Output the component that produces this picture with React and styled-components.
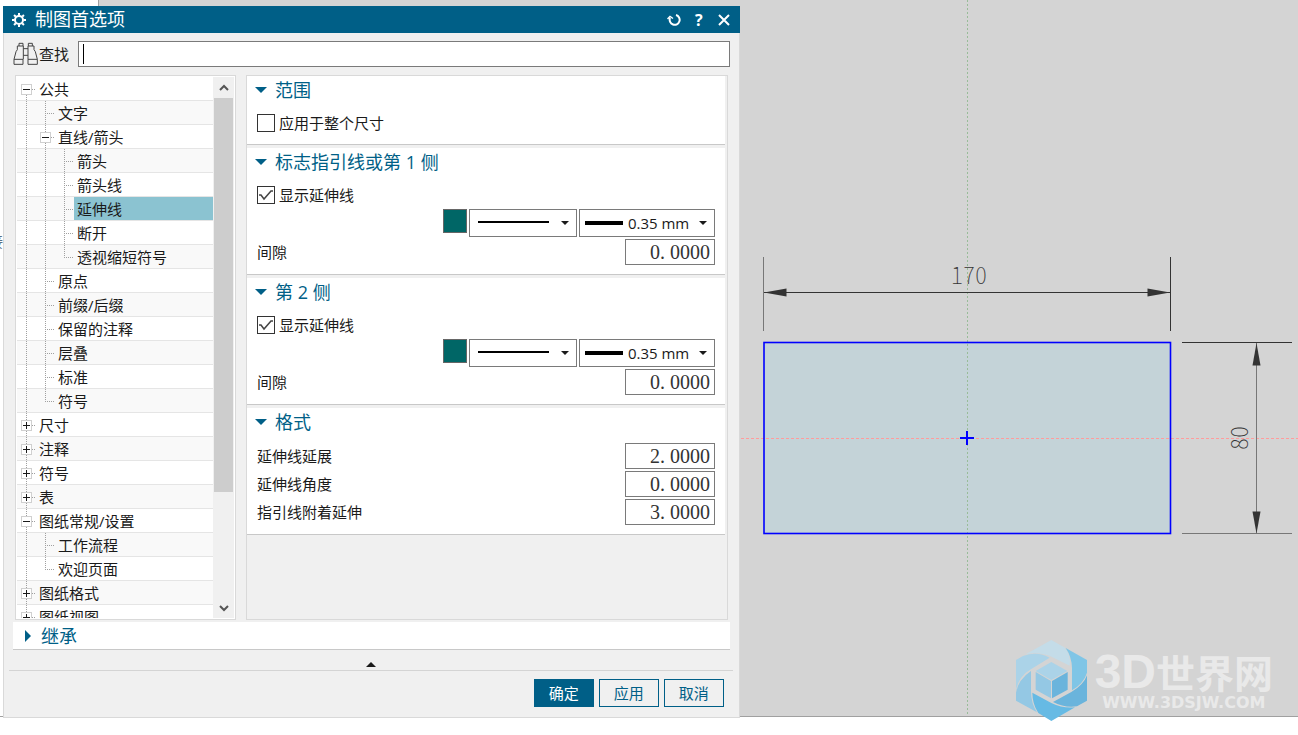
import React, { useState } from "react";
import styled, { createGlobalStyle, css } from "styled-components";

const GlobalStyle = createGlobalStyle`
  * {
    box-sizing: border-box;
  }

  body {
    margin: 0;
    background: #ffffff;
    color: #1a1a1a;
    font: 15px/24px "Open Sans", "Noto Sans CJK SC", sans-serif;
  }

  button,
  input,
  select {
    margin: 0;
    padding: 0;
    border: 0;
    border-radius: 0;
    outline: none;
    color: inherit;
    font: inherit;
  }
`;

const Page = styled.main`
  height: 100vh;
  min-height: 500px;
  padding-bottom: 18px;
`;

const Workspace = styled.div`
  position: relative;
  display: grid;
  grid-template-columns: 3px minmax(560px, 1fr) 43%;
  grid-template-rows: minmax(0, 1fr);
  height: 100%;
  border-bottom: 1px solid #a0a0a0;
  background: linear-gradient(
    90deg,
    #ffffff 98px,
    #a0a0a0 98px,
    #a0a0a0 99px,
    #d4d4d4 99px
  );
`;

const Gutter = styled.div`
  display: flex;
  justify-content: flex-end;
  align-items: flex-start;
  padding-top: 229px;
  overflow: hidden;
  background: #ffffff;
  color: #5b7083;
`;

const Dialog = styled.section`
  display: flex;
  flex-direction: column;
  margin: 6px 0 -2px;
  border: solid #d9d9d9;
  border-width: 0 1px 1px;
  background: #f0f0f0;
`;

const TitleBar = styled.header`
  display: flex;
  align-items: center;
  gap: 9px;
  flex: none;
  height: 27px;
  margin: 0 -1px;
  padding: 0 8px 0 9px;
  background: #005f87;
  color: #ffffff;
`;

const Title = styled.h1`
  flex: 1;
  margin: 0;
  font-size: 18px;
  font-weight: 400;
  line-height: 27px;
`;

const TitleButton = styled.button`
  display: grid;
  place-items: center;
  width: 16px;
  height: 20px;
  background: none;
  font: bold 16px/20px "Open Sans", sans-serif;
`;

const SearchRow = styled.div`
  display: flex;
  align-items: center;
  flex: none;
  gap: 9px;
  padding: 8px 9px 8px;
`;

const SearchLabel = styled.label`
  display: flex;
  align-items: center;
  gap: 1px;
`;

const SearchBox = styled.div`
  position: relative;
  flex: 1;
`;

const SearchInput = styled.input`
  display: block;
  width: 100%;
  height: 26px;
  padding: 0 8px;
  border: 1px solid #7a7a7a;
  background: #ffffff;
`;

const Caret = styled.span`
  position: absolute;
  top: 3px;
  left: 5px;
  width: 1px;
  height: 20px;
  background: #000000;
`;

const Panels = styled.div`
  display: grid;
  grid-template-columns: 221px minmax(0, 1fr);
  grid-template-rows: minmax(0, 1fr);
  gap: 10px;
  flex: 1;
  min-height: 0;
  padding: 0 11px;
`;

const TreePanel = styled.nav`
  display: flex;
  padding: 1px;
  border: 1px solid #d9d9d9;
  background: #ffffff;
`;

const TreeList = styled.ul`
  flex: 1;
  margin: 0;
  padding: 0;
  overflow: hidden;
  list-style: none;
`;

const TreeRow = styled.li`
  display: flex;
  height: 24px;
  background: linear-gradient(#e5e5e5, #e5e5e5) 0 100% / 100% 1px no-repeat;

  &:nth-child(even) {
    background-color: #f9f9f9;
  }
`;

const dots = "#a0a0a0 0 1px, transparent 1px 2px";

const guideBackground = {
  line: `repeating-linear-gradient(${dots}) 9px 0 / 1px 100% no-repeat`,
  tee: `repeating-linear-gradient(${dots}) 9px 0 / 1px 100% no-repeat,
    repeating-linear-gradient(90deg, ${dots}) 9px 12px / 10px 1px no-repeat`,
  end: `repeating-linear-gradient(${dots}) 9px 0 / 1px 12px no-repeat,
    repeating-linear-gradient(90deg, ${dots}) 9px 12px / 10px 1px no-repeat`,
  start: `repeating-linear-gradient(${dots}) 9px 12px / 1px 12px no-repeat,
    repeating-linear-gradient(90deg, ${dots}) 9px 12px / 10px 1px no-repeat`
};

const Guide = styled.span`
  flex: none;
  width: 19px;
  height: 24px;
  padding: 7px 4px 0;
  background: ${({ $kind }) => guideBackground[$kind]};
`;

const Toggle = styled.button`
  display: block;
  width: 11px;
  height: 11px;
  border: 1px solid #d0d0d0;
  background: linear-gradient(#1a1a1a, #1a1a1a) 50% 50% / 7px 1px no-repeat,
    ${({ $open }) =>
      $open
        ? ""
        : "linear-gradient(#1a1a1a, #1a1a1a) 50% 50% / 1px 7px no-repeat,"}
    #ffffff;
`;

const TreeLabel = styled.button`
  flex: 1;
  padding-left: 3px;
  overflow: hidden;
  background: none;
  line-height: 24px;
  text-align: left;
  white-space: nowrap;

  ${({ $selected }) =>
    $selected &&
    css`
      margin-bottom: 1px;
      background: #8bc3d1;
    `}
`;

const ScrollBar = styled.div`
  display: flex;
  flex-direction: column;
  flex: none;
  width: 21px;
  padding: 0 1px;
  background: #f0f0f0;
`;

const ScrollButton = styled.button`
  display: grid;
  place-items: center;
  flex: none;
  height: 21px;
  background: #f0f0f0;
`;

const ScrollTrack = styled.div`
  flex: 1;
`;

const ScrollThumb = styled.div`
  height: 79%;
  background: #cdcdcd;
`;

const Settings = styled.div`
  display: flex;
  flex-direction: column;
  gap: 3px;
  padding-right: 2px;
  border: 1px solid #d9d9d9;
  overflow: hidden;
`;

const Section = styled.section`
  padding: 0 10px 9px;
  border-bottom: 1px solid #c8c8c8;
  background: #ffffff;
`;

const SectionHeading = styled.h2`
  display: flex;
  align-items: center;
  gap: 8px;
  margin: 0 0 7px -2px;
  color: #005f87;
  font-size: 18px;
  font-weight: 400;
  line-height: 28px;
`;

const Fields = styled.div`
  display: grid;
  gap: 2px;
`;

const CheckLabel = styled.label`
  display: flex;
  align-items: center;
  gap: 4px;
  height: 24px;
`;

const CheckBox = styled.input`
  appearance: none;
  width: 18px;
  height: 18px;
  border: 1px solid #333333;
  background: #ffffff;

  &:checked {
    background: url("data:image/svg+xml,%3Csvg xmlns='http://www.w3.org/2000/svg' viewBox='0 0 16 16'%3E%3Cpath d='M1 8l2 0 3 4L13 4h2' fill='none' stroke='%23444' stroke-width='1.500'/%3E%3C/svg%3E")
      center / 16px 16px no-repeat;
  }
`;

const FieldRow = styled.div`
  display: flex;
  align-items: center;
  justify-content: space-between;
`;

const StyleRow = styled.div`
  display: flex;
  align-items: flex-start;
  justify-content: flex-end;
  gap: 2px;
`;

const NumberInput = styled.input`
  width: 90px;
  height: 26px;
  padding-right: 4px;
  border: 1px solid #7a7a7a;
  background: #ffffff;
  color: #333333;
  font: 20px/24px "Liberation Serif", serif;
  text-align: right;
`;

const Swatch = styled.button`
  width: 24px;
  height: 24px;
  border: 1px solid #666666;
  background: #006666;
`;

const Combo = styled.div`
  position: relative;
  width: ${({ $wide }) => ($wide ? "136px" : "108px")};
  height: 28px;
`;

const Select = styled.select`
  appearance: none;
  width: 100%;
  height: 100%;
  padding-left: 48px;
  border: 1px solid #7a7a7a;
  background: #ffffff;
  font-family: "Open Sans", sans-serif;
`;

const StrokeSample = styled.span`
  position: absolute;
  top: 12px;
  left: ${({ $thick }) => ($thick ? "6px" : "9px")};
  width: ${({ $thick }) => ($thick ? "38px" : "71px")};
  height: ${({ $thick }) => ($thick ? "4px" : "2px")};
  background: #000000;
  pointer-events: none;
`;

const ComboArrow = styled.svg`
  position: absolute;
  top: 12px;
  right: 8px;
  pointer-events: none;
`;

const InheritBar = styled.button`
  display: flex;
  align-items: center;
  gap: 10px;
  flex: none;
  height: 28px;
  margin: 2px 9px 0;
  padding-left: 12px;
  border-bottom: 1px solid #c8c8c8;
  background: #ffffff;
  color: #005f87;
  font-size: 18px;
`;

const CollapseButton = styled.button`
  display: flex;
  align-items: flex-end;
  justify-content: center;
  flex: none;
  height: 21px;
  margin: 0 6px 0 5px;
  padding-bottom: 3px;
  border-bottom: 1px solid #d4d4d4;
  background: none;
`;

const Footer = styled.footer`
  display: flex;
  justify-content: flex-end;
  flex: none;
  gap: 5px;
  padding: 8px 15px 10px;
`;

const FooterButton = styled.button`
  width: 60px;
  height: 28px;
  border: 1px solid #005f87;
  background: ${({ $primary }) => ($primary ? "#005f87" : "#f0f0f0")};
  color: ${({ $primary }) => ($primary ? "#ffffff" : "#005f87")};
`;

const Canvas = styled.svg`
  display: block;
  width: 100%;
  height: 100%;
`;

const DimensionText = styled.text`
  fill: #333333;
  font-family: "Noto Sans CJK SC", sans-serif;
  font-size: 24px;
  font-weight: 100;
  font-feature-settings: "hwid";
  text-anchor: middle;
`;

const Watermark = styled.div`
  position: absolute;
  right: 25px;
  bottom: -6px;
  display: flex;
  align-items: flex-end;
  gap: 7px;
  pointer-events: none;
`;

const WatermarkLogo = styled.svg`
  flex: none;
  overflow: visible;
`;

const WatermarkText = styled.div`
  padding-bottom: 10px;
  color: rgba(255, 255, 255, 0.5);
  font: bold 39px/44px "Noto Sans CJK SC", sans-serif;
  white-space: nowrap;

  b {
    font: bold 48px/44px "Liberation Sans", sans-serif;
  }

  small {
    display: block;
    font: bold 16px/18px "DejaVu Sans", sans-serif;
    text-align: center;
  }
`;

const tree = [
  { label: "公共", guides: ["start"], open: true },
  { label: "文字", guides: ["line", "tee"] },
  { label: "直线/箭头", guides: ["line", "tee"], open: true },
  { label: "箭头", guides: ["line", "line", "tee"] },
  { label: "箭头线", guides: ["line", "line", "tee"] },
  { label: "延伸线", guides: ["line", "line", "tee"] },
  { label: "断开", guides: ["line", "line", "tee"] },
  { label: "透视缩短符号", guides: ["line", "line", "end"] },
  { label: "原点", guides: ["line", "tee"] },
  { label: "前缀/后缀", guides: ["line", "tee"] },
  { label: "保留的注释", guides: ["line", "tee"] },
  { label: "层叠", guides: ["line", "tee"] },
  { label: "标准", guides: ["line", "tee"] },
  { label: "符号", guides: ["line", "end"] },
  { label: "尺寸", guides: ["tee"], open: false },
  { label: "注释", guides: ["tee"], open: false },
  { label: "符号", guides: ["tee"], open: false },
  { label: "表", guides: ["tee"], open: false },
  { label: "图纸常规/设置", guides: ["tee"], open: true },
  { label: "工作流程", guides: ["line", "tee"] },
  { label: "欢迎页面", guides: ["line", "end"] },
  { label: "图纸格式", guides: ["tee"], open: false },
  { label: "图纸视图", guides: ["tee"], open: false }
];

const GearIcon = () => (
  <svg width="14" height="14" viewBox="-7 -7 14 14" stroke="#ffffff" fill="none">
    <circle r="4" strokeWidth="2" />
    {[0, 45, 90, 135, 180, 225, 270, 315].map(angle => (
      <path
        key={angle}
        d="M0 -4.500V-7"
        strokeWidth="2"
        transform={`rotate(${angle})`}
      />
    ))}
  </svg>
);

const BinocularsIcon = () => (
  <svg width="25" height="24" viewBox="37 123 75 72" fill="none" stroke="#444444" strokeWidth="3">
    <path d="M55 135V127H67V135M50 135H68V175M50 135V146L46 152L40 175V190H67V175H40" />
    <path d="M83 135V127H95V135M100 135H82V175M100 135V146L104 152L110 175V190H82V175H110" />
    <path d="M68 143H82M68 163H82" />
  </svg>
);

const DownTriangle = () => (
  <svg width="12" height="8" viewBox="0 0 12 8">
    <path d="M0 1H12L6 7Z" fill="#005f87" />
  </svg>
);

const Chevron = ({ up }) => (
  <svg width="10" height="8" viewBox="0 0 10 8" fill="none" stroke="#555555" strokeWidth="2">
    <path d={up ? "M1 6L5 2L9 6" : "M1 2L5 6L9 2"} />
  </svg>
);

const Arrow = () => (
  <ComboArrow width="8" height="5" viewBox="0 0 8 5">
    <path d="M0 0H8L4 4Z" fill="#1a1a1a" />
  </ComboArrow>
);

const NumberField = ({ id, label, value }) => (
  <FieldRow>
    <label htmlFor={id}>{label}</label>
    <NumberInput id={id} defaultValue={value} />
  </FieldRow>
);

const SettingsSection = ({ title, children }) => (
  <Section>
    <SectionHeading>
      <DownTriangle />
      {title}
    </SectionHeading>
    <Fields>{children}</Fields>
  </Section>
);

const LineFields = ({ id }) => (
  <>
    <CheckLabel>
      <CheckBox type="checkbox" defaultChecked />
      显示延伸线
    </CheckLabel>
    <StyleRow>
      <Swatch type="button" aria-label="颜色" />
      <Combo>
        <Select aria-label="线型">
          <option value="solid" aria-label="实线"></option>
        </Select>
        <StrokeSample />
        <Arrow />
      </Combo>
      <Combo $wide>
        <Select aria-label="线宽">
          <option>0.35 mm</option>
        </Select>
        <StrokeSample $thick />
        <Arrow />
      </Combo>
    </StyleRow>
    <NumberField id={id} label="间隙" value="0. 0000" />
  </>
);

const Drawing = () => (
  <Canvas viewBox="0 0 558 716" preserveAspectRatio="xMinYMin meet">
    <rect x="24" y="343" width="406" height="190" fill="#c4d3d8" />
    <path d="M227.500 0V716" stroke="#98bc98" strokeDasharray="2 2" />
    <path d="M1 438.500H558" stroke="#ff9c9c" strokeDasharray="3 2" />
    <rect x="24" y="342.500" width="406.500" height="191" fill="none" stroke="#0000ff" strokeWidth="1.600" />
    <path d="M220 438H234M227 431V445" stroke="#0000ff" strokeWidth="2" />
    <g stroke="#333333">
      <path d="M23.500 257V331" stroke="#777777" />
      <path d="M430.500 257V331M24 292.500H430M442 342.500H552" />
      <path d="M516.500 343V533M442 533.500H552" stroke="#777777" />
    </g>
    <g fill="#333333">
      <path d="M24 292.500L46.500 288.500V296.500Z" />
      <path d="M430 292.500L407.500 288.500V296.500Z" />
      <path d="M516.500 343L512.500 365.500H520.500Z" />
      <path d="M516.500 533.500L512.500 511.500H520.500Z" />
    </g>
    <DimensionText x="229" y="284">170</DimensionText>
    <DimensionText transform="translate(508 438) rotate(-90)">80</DimensionText>
  </Canvas>
);

const Logo = () => (
  <WatermarkLogo width="73" height="83" viewBox="44 29 219 249">
    <path d="M153 32L194 55Q213 80 208 109L155 83Q118 66 76 75Z" fill="#c4dce8" />
    <path d="M47 92L68 80Q112 65 148 85L93 119Q55 140 47 182Z" fill="#abd3e8" />
    <path d="M92 125Q54 150 47 190V214L110 249Q92 222 92 186Z" fill="#94c8e4" />
    <path d="M96 190L153 221Q188 238 224 234L153 275L114 251Q96 224 96 190Z" fill="#66bae4" />
    <path d="M260 138V214L230 231Q192 236 158 218L213 188Q250 167 260 138Z" fill="#6ab4dc" />
    <path d="M196 56L260 92V130Q250 162 215 183V116Q214 82 196 56Z" fill="#7fc5e6" />
    <path d="M153 98L201 125L153 152L106 125Z" fill="#abd3e8" />
    <path d="M106 128L152 155V207L106 181Z" fill="#94c8e4" />
    <path d="M202 128L155 155V207L202 181Z" fill="#6ab4dc" />
  </WatermarkLogo>
);

export default function App() {
  const [selected, setSelected] = useState(5);

  return (
    <Page>
      <GlobalStyle />
      <Workspace>
        <Gutter>接</Gutter>
        <Dialog>
          <TitleBar>
            <GearIcon />
            <Title>制图首选项</Title>
            <TitleButton type="button" aria-label="重置">
              <svg width="14" height="14" viewBox="0 0 14 14" fill="none" stroke="#ffffff" strokeWidth="2">
                <path d="M9 2A5 5 0 1 1 3 5" />
                <path d="M0.500 6L3 3.500L6 5.500" strokeWidth="1.500" />
              </svg>
            </TitleButton>
            <TitleButton type="button" aria-label="帮助">
              ?
            </TitleButton>
            <TitleButton type="button" aria-label="关闭">
              <svg width="12" height="12" viewBox="0 0 12 12" stroke="#ffffff" strokeWidth="2">
                <path d="M1 1L11 11M11 1L1 11" />
              </svg>
            </TitleButton>
          </TitleBar>
          <SearchRow>
            <SearchLabel htmlFor="search">
              <BinocularsIcon />
              查找
            </SearchLabel>
            <SearchBox>
              <SearchInput id="search" type="text" />
              <Caret />
            </SearchBox>
          </SearchRow>
          <Panels>
            <TreePanel>
              <TreeList>
                {tree.map(({ label, guides, open }, index) => (
                  <TreeRow key={index}>
                    {guides.map((kind, level) => (
                      <Guide key={level} $kind={kind}>
                        {open !== undefined && level === guides.length - 1 && (
                          <Toggle type="button" aria-label={label} $open={open} />
                        )}
                      </Guide>
                    ))}
                    <TreeLabel
                      type="button"
                      $selected={index === selected}
                      onClick={() => setSelected(index)}
                    >
                      {label}
                    </TreeLabel>
                  </TreeRow>
                ))}
              </TreeList>
              <ScrollBar>
                <ScrollButton type="button" aria-label="向上滚动">
                  <Chevron up />
                </ScrollButton>
                <ScrollTrack>
                  <ScrollThumb />
                </ScrollTrack>
                <ScrollButton type="button" aria-label="向下滚动">
                  <Chevron />
                </ScrollButton>
              </ScrollBar>
            </TreePanel>
            <Settings>
              <SettingsSection title="范围">
                <CheckLabel>
                  <CheckBox type="checkbox" />
                  应用于整个尺寸
                </CheckLabel>
              </SettingsSection>
              <SettingsSection title="标志指引线或第 1 侧">
                <LineFields id="gap-1" />
              </SettingsSection>
              <SettingsSection title="第 2 侧">
                <LineFields id="gap-2" />
              </SettingsSection>
              <SettingsSection title="格式">
                <NumberField id="extend" label="延伸线延展" value="2. 0000" />
                <NumberField id="angle" label="延伸线角度" value="0. 0000" />
                <NumberField id="leader" label="指引线附着延伸" value="3. 0000" />
              </SettingsSection>
            </Settings>
          </Panels>
          <InheritBar type="button">
            <svg width="6" height="12" viewBox="0 0 6 12">
              <path d="M0 0L6 6L0 12Z" fill="#005f87" />
            </svg>
            继承
          </InheritBar>
          <CollapseButton type="button" aria-label="折叠">
            <svg width="10" height="5" viewBox="0 0 10 5">
              <path d="M0 5H10L5 0Z" fill="#1a1a1a" />
            </svg>
          </CollapseButton>
          <Footer>
            <FooterButton type="button" $primary>
              确定
            </FooterButton>
            <FooterButton type="button">应用</FooterButton>
            <FooterButton type="button">取消</FooterButton>
          </Footer>
        </Dialog>
        <Drawing />
        <Watermark>
          <Logo />
          <WatermarkText>
            <b>3D</b>世界网
            <small>WWW.3DSJW.COM</small>
          </WatermarkText>
        </Watermark>
      </Workspace>
    </Page>
  );
}
